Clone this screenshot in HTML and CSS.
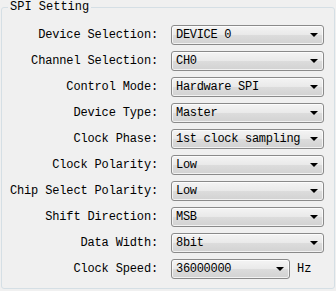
FILE: index.html
```html
<!doctype html>
<html>
<head>
<meta charset="utf-8">
<title>SPI Setting</title>
<link rel="stylesheet" href="styles.css">
</head>
<body>

<fieldset class="group">
<legend>SPI Setting</legend>

<div class="form">
 <span class="label">Device Selection:</span>
 <div class="combo"><span>DEVICE 0</span><i class="arrow"></i></div>

 <span class="label">Channel Selection:</span>
 <div class="combo"><span>CH0</span><i class="arrow"></i></div>

 <span class="label">Control Mode:</span>
 <div class="combo"><span>Hardware SPI</span><i class="arrow"></i></div>

 <span class="label">Device Type:</span>
 <div class="combo"><span>Master</span><i class="arrow"></i></div>

 <span class="label">Clock Phase:</span>
 <div class="combo"><span>1st clock sampling</span><i class="arrow"></i></div>

 <span class="label">Clock Polarity:</span>
 <div class="combo"><span>Low</span><i class="arrow"></i></div>

 <span class="label">Chip Select Polarity:</span>
 <div class="combo"><span>Low</span><i class="arrow"></i></div>

 <span class="label">Shift Direction:</span>
 <div class="combo"><span>MSB</span><i class="arrow"></i></div>

 <span class="label">Data Width:</span>
 <div class="combo"><span>8bit</span><i class="arrow"></i></div>

 <span class="label">Clock Speed:</span>
 <div class="speed">
  <div class="combo short"><span>36000000</span><i class="arrow"></i></div>
  <span class="unit">Hz</span>
 </div>
</div>

</fieldset>

</body>
</html>
```

FILE: styles.css
```css
html, body {
	margin: 0;
	background: #f0f0f0;
}

body {
	padding: 0 1px;
	font-family: "Liberation Mono", "DejaVu Sans Mono", monospace;
	font-size: 12px;
	color: #000;
}

.group {
	margin: 0;
	padding: 11px 0 9px 0;
	border: 1px solid #d5dfe5;
	border-radius: 3px;
	box-sizing: border-box;
	height: 289px;
}

.group legend {
	margin-left: 6px;
	padding: 0 2px;
	line-height: 14px;
	font-size: 12px;
}

.form {
	display: grid;
	grid-template-columns: 156px 153px;
	column-gap: 13px;
	row-gap: 6px;
	grid-auto-rows: 20px;
	align-items: center;
}

.label {
	text-align: right;
	white-space: nowrap;
	letter-spacing: -0.15px;
}

.combo {
	height: 20px;
	box-sizing: border-box;
	border: 1px solid #8a8a8a;
	border-radius: 3px;
	background: linear-gradient(#f4f4f4, #e9e9e9 50%, #dcdcdc 51%, #d2d2d2);
	box-shadow: inset 0 0 0 1px rgba(255,255,255,0.7);
	display: flex;
	align-items: center;
	padding-left: 4px;
	white-space: nowrap;
}

.combo span {
	flex: 1;
	line-height: 18px;
	letter-spacing: -0.3px;
}

.arrow {
	width: 0;
	height: 0;
	margin-right: 5px;
	border-left: 4px solid transparent;
	border-right: 4px solid transparent;
	border-top: 4px solid #000;
}

.speed {
	display: flex;
	align-items: center;
	gap: 7px;
}

.combo.short {
	width: 119px;
}

.unit {
	line-height: 20px;
}
```
